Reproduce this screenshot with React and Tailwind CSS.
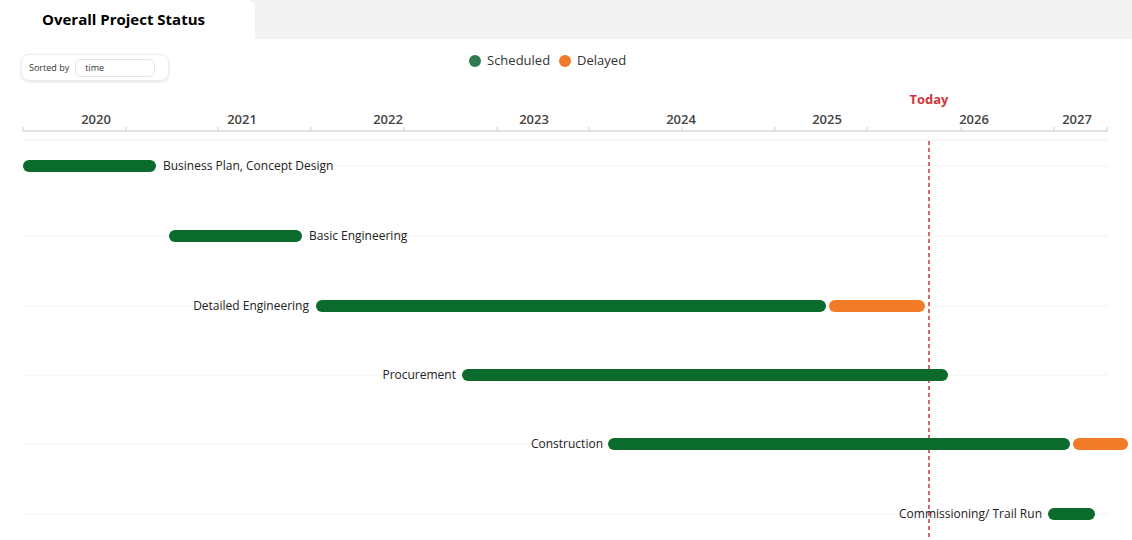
export default function App() {
  const green = "#0a6b2c";
  const orange = "#f27b28";
  const years = [[96,"2020"],[242,"2021"],[388,"2022"],[534,"2023"],[681,"2024"],[827,"2025"],[974,"2026"],[1077,"2027"]];
  const ticks = [23,126,218,311,404,497,589,682,775,867,961,1054,1107];
  const rows = [
    { y:166, bars:[[23,156,green]], label:"Business Plan, Concept Design", lx:163, anchor:"start" },
    { y:236, bars:[[169,302,green]], label:"Basic Engineering", lx:309, anchor:"start" },
    { y:306, bars:[[316,826,green],[829,925,orange]], label:"Detailed Engineering", lx:309, anchor:"end" },
    { y:375, bars:[[462,948,green]], label:"Procurement", lx:456, anchor:"end" },
    { y:444, bars:[[608,1070,green],[1073,1128,orange]], label:"Construction", lx:603, anchor:"end" },
    { y:514, bars:[[1048,1095,green]], label:"Commissioning/ Trail Run", lx:1042, anchor:"end" },
  ];
  return (
    <div className="w-[1132px] h-[540px] bg-white overflow-hidden" style={{fontFamily:"'Open Sans', 'Noto Sans', sans-serif"}}>
      <div className="h-[39px] bg-[#f3f3f3] flex">
        <div className="w-[255px] bg-white rounded-tr-lg flex items-center pl-[42px] text-[15px] font-bold text-black">Overall Project Status</div>
      </div>
      <div className="relative h-[501px]">
        <div className="absolute left-[21px] top-[15px] w-[148px] h-[27px] rounded-lg border border-[#ececec] flex items-center pl-[7px] gap-[6px] shadow-sm">
          <span className="text-[9px] text-[#333]">Sorted by</span>
          <span className="w-[80px] h-[18px] rounded-md border border-[#e4e4e4] text-[9px] text-[#333] pl-[9px] flex items-center">time</span>
        </div>
        <div className="absolute left-[469px] top-[12px] flex items-center gap-[6px] text-[13px] text-[#333]">
          <span className="w-[12px] h-[12px] rounded-full bg-[#2f7a50]"></span>
          <span>Scheduled</span>
          <span className="w-[12px] h-[12px] rounded-full bg-[#f07a2c] ml-[3px]"></span>
          <span>Delayed</span>
        </div>
        <svg width="1132" height="501" viewBox="0 39 1132 501" className="absolute left-0 top-0">
          <text x="929" y="104" textAnchor="middle" fill="#d1343b" fontSize="13" fontWeight="700">Today</text>
          {years.map(([x,t]) => <text key={t} x={x} y="124" textAnchor="middle" fill="#444" fontSize="13" fontWeight="600">{t}</text>)}
          <line x1="23" y1="131" x2="1108" y2="131" stroke="#d9d9d9" strokeWidth="1.5"/>
          {ticks.map(x => <line key={x} x1={x} y1="127" x2={x} y2="131" stroke="#cfcfcf"/>)}
          <line x1="23" y1="140" x2="1108" y2="140" stroke="#f0f0f0"/>
          {rows.map(r => <line key={r.y} x1="23" y1={r.y} x2="1108" y2={r.y} stroke="#f2f2f2"/>)}
          <line x1="929" y1="141" x2="929" y2="540" stroke="#d1343b" strokeWidth="1.5" strokeDasharray="4 3"/>
          {rows.map(r => (
            <g key={r.label}>
              {r.bars.map(([a,b,c]) => <line key={a} x1={a+6} y1={r.y} x2={b-6} y2={r.y} stroke={c} strokeWidth="12" strokeLinecap="round"/>)}
              <text x={r.lx} y={r.y+4} textAnchor={r.anchor} fill="#222" fontSize="12">{r.label}</text>
            </g>
          ))}
        </svg>
      </div>
    </div>
  );
}
